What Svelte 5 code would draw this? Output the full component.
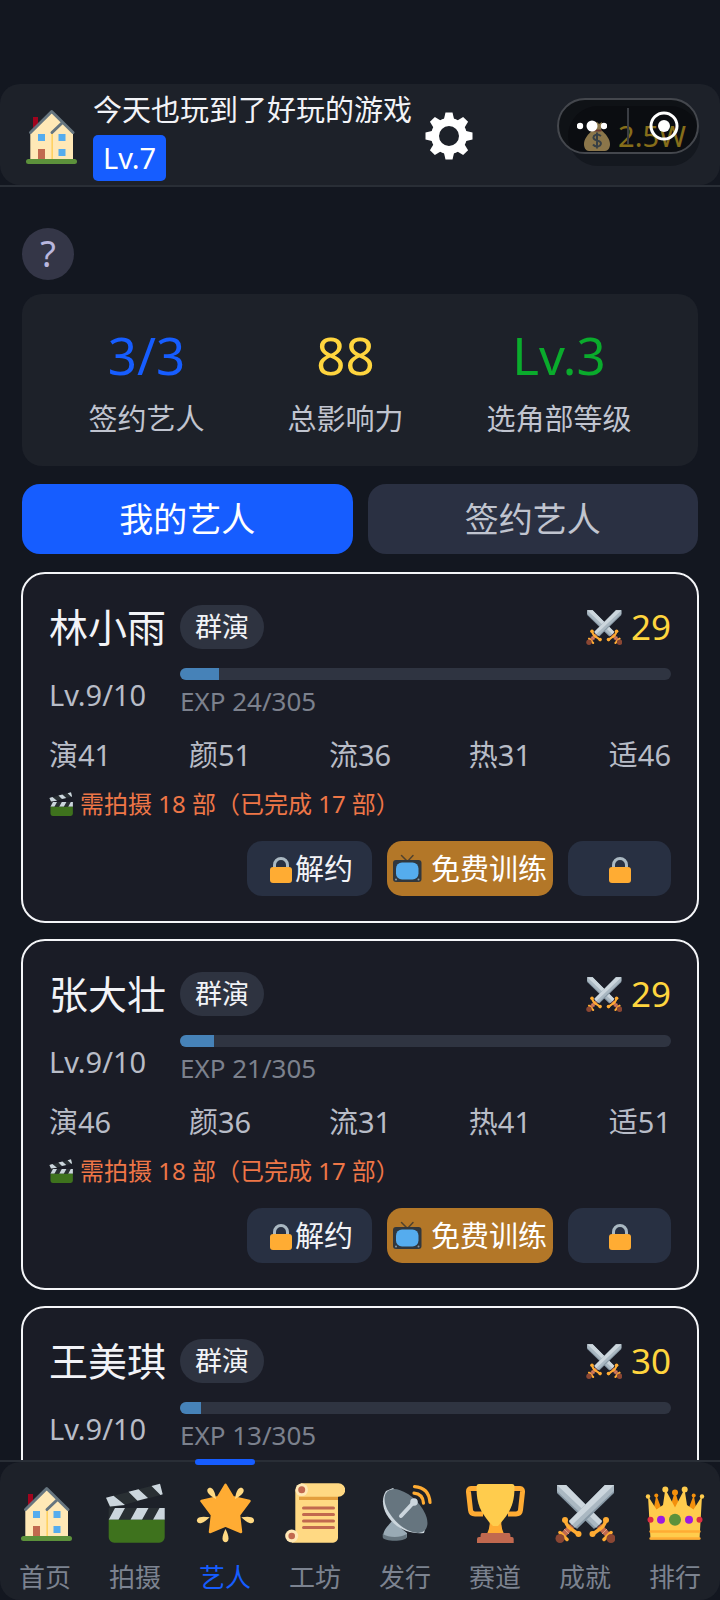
<script>
  const stats = [
    { value: '3/3', label: '签约艺人', tone: 'blue' },
    { value: '88', label: '总影响力', tone: 'gold' },
    { value: 'Lv.3', label: '选角部等级', tone: 'green' }
  ];

  const artists = [
    { name: '林小雨', power: 29, exp: 24, attrs: ['演41', '颜51', '流36', '热31', '适46'] },
    { name: '张大壮', power: 29, exp: 21, attrs: ['演46', '颜36', '流31', '热41', '适51'] },
    { name: '王美琪', power: 30, exp: 13 }
  ];
  const expMax = 305;

  const navItems = [
    { label: '首页', icon: 'house' },
    { label: '拍摄', icon: 'clapper' },
    { label: '艺人', icon: 'star' },
    { label: '工坊', icon: 'scroll' },
    { label: '发行', icon: 'dish' },
    { label: '赛道', icon: 'trophy' },
    { label: '成就', icon: 'swords' },
    { label: '排行', icon: 'crown' }
  ];

  let tab = $state('mine');
  let page = $state('艺人');
</script>

{#snippet sword()}
  <path fill="#8899a6" d="M50 2h9v8L22 46l-8-8z" />
  <path fill="#aab8c2" d="M50 2h9v6L20 45l-6-6z" />
  <path fill="#ccd6dd" d="M50 2h9L17 42l-3-4z" />
  <path stroke="#c1694f" stroke-width="6" d="M17 43 7 53" />
  <path stroke="#d99e82" stroke-width="1" d="m12 43 5 5m-8-2 5 5" />
  <path stroke="#ffac33" stroke-width="3.500" stroke-linecap="round" d="M10 37q2 7 6 9 3 2 7 5M5 49.500l7 7" />
  <circle cx="10" cy="37" r="3" fill="#ffac33" />
  <circle cx="23.500" cy="51" r="3" fill="#ffac33" />
  <circle cx="5" cy="55.500" r="4.500" fill="#8a4633" />
{/snippet}

{#snippet icon(kind)}
  <svg class="icon {kind}" viewBox="0 0 60 60" fill="none" aria-hidden="true">
    {#if kind === 'house'}
      <path fill="#a0041e" d="M13 11h5v13h-5z" />
      <path fill="#ffe8b6" d="M31.700 6 53 27v26H10.300V27z" />
      <path fill="#ffcc4d" d="M31.500 28h1.300v25h-1.300z" />
      <path stroke="#66757f" stroke-width="3" stroke-linejoin="round" stroke-linecap="round" d="M10.500 26.500 31.700 5.500 53 26.500M32 26.500l10-9.500" />
      <path fill="#55acee" d="M18 28h7v7h-7zM38.500 28h7v7h-7zM38.500 43h7v7h-7z" />
      <path fill="#c1694f" d="M18 43h7v10h-7z" />
      <rect x="6" y="53" width="51" height="5" rx="2.500" fill="#5c913b" />
    {:else if kind === 'clapper'}
      <path fill="#292f33" d="m1 14.700 54-14L57.700 11.500 5 25.500zM3.700 25h56v12h-56z" />
      <path fill="#ccd6dd" d="m1 14.700 7.500-2L20 22 5 23.500zM23.500 8.800l10-2.600L43 15l-10.500 2.800zM46.500 3l8.500-2.300 2.700 10.600-2.200.6zM3.700 36.700 10 25h10l-6.500 11.700zM25.500 36.700 32 25h11.500L37 36.700zM48 36.700 54.500 25h5.200v11.700z" />
      <path fill="#3e721d" d="M3.700 36.700h56V54a5.500 5.500 0 0 1-5.500 5.700h-45A5.500 5.500 0 0 1 3.700 54z" />
    {:else if kind === 'star'}
      <path fill="#ffac33" stroke="#ffac33" stroke-width="2.500" stroke-linejoin="round" d="m30.500 1.800 7.500 12.500 16.500 3.700-10.500 14 2 17-15.500-6.500L15 49l2-17L6.500 18 23 14.300z" />
      <g fill="#ffd983">
        {#each [0, 73, -73, 145, -145] as angle}
          <path d="M30.500 46c2 4 3 7 3 9.500 0 5-6 5-6 0 0-2.500 1-5.500 3-9.500z" transform="rotate({angle} 30.500 29.500)" />
        {/each}
      </g>
    {:else if kind === 'scroll'}
      <path fill="#ffd983" d="M16 .3h37.500a6.500 6.500 0 0 1 0 13.400H53V55a5 5 0 0 1-5 4.700H7V48h3.300V7z" />
      <path fill="#e39f3d" d="M14 13.700h39V17H14z" />
      <circle cx="16.700" cy="6.700" r="6.300" fill="#ffe8b6" />
      <circle cx="6.700" cy="53" r="6.500" fill="#ffe8b6" />
      <circle cx="16.700" cy="6.700" r="3.500" fill="#c1694f" />
      <circle cx="6.700" cy="53" r="3.300" fill="#c1694f" />
      <path stroke="#c1694f" stroke-width="3" stroke-linecap="round" d="M18.500 25h30m-30 6.500h30m-30 6.500h30m-30 6.600h30" />
    {:else if kind === 'dish'}
      <path fill="#99aab5" d="M8 54c0-7 5-11 9-16l15 12v4c-3 4-21 4-24 0z" />
      <path fill="#66757f" d="M7.700 51c6 4 18 4 24 0v3c0 5-24 5-24 0z" />
      <path fill="#ccd6dd" d="M11 8C0 25 20 53 49 50L52 40 18 5z" />
      <ellipse cx="31" cy="28" rx="27" ry="14.500" fill="#66757f" transform="rotate(46 31 28)" />
      <path stroke="#ccd6dd" stroke-width="4" stroke-linecap="round" d="m26 33 13-14" />
      <circle cx="39" cy="19" r="3.800" fill="#ccd6dd" />
      <path stroke="#ffac33" stroke-width="3.200" stroke-linecap="round" d="M39 10.200q9 .8 9.500 10M39.500 3.600Q54 4.500 55 19.500" />
    {:else if kind === 'trophy'}
      <path stroke="#ffac33" stroke-width="5" stroke-linejoin="round" d="M15 5.500H6Q3.300 5.500 3.500 9l2 18q.4 4 4.500 4h8M46 5.500h9q2.700 0 2.500 3.500l-2 18q-.4 4-4.500 4h-8" />
      <path fill="#ffac33" d="M24.500 36h12q-1 8 2.500 15H22q3.500-7 2.500-15z" />
      <path fill="#ffcc4d" d="M14 1h33q2.500 0 2.500 3c0 18-5 25-13 35l-3.500 4h-5L24 39C16 29 11.500 22 11.500 4q0-3 2.500-3z" />
      <path fill="#c1694f" d="M17 50h27q1.500 0 1.500 4H47q1.700 0 1.700 2v4H12v-4q0-2 2-2h1.500q0-4 1.500-4z" />
    {:else if kind === 'swords'}
      <g transform="matrix(-1 0 0 1 61 0)">{@render sword()}</g>
      <g>{@render sword()}</g>
    {:else if kind === 'crown'}
      <path fill="#f4900c" d="m11.300 12 6 16h-9zM30 8l6 20H24zM48.700 12l3 16h-9z" />
      <g fill="#f4900c"><circle cx="11.300" cy="12.500" r="2" /><circle cx="30" cy="9.500" r="3" /><circle cx="48.700" cy="12.500" r="2" /></g>
      <path fill="#ffcc4d" d="M5.500 56.500 3 13l8.500 13.500L18 22l2.300-16L30 24.500 39.500 6 42 22l6.500 4.500L57 13l-2.500 43.500z" />
      <g fill="#ffcc4d"><circle cx="3" cy="13.500" r="2.200" /><circle cx="20.300" cy="6.500" r="3" /><circle cx="39.700" cy="6.500" r="3" /><circle cx="57" cy="13.500" r="2.200" /></g>
      <path stroke="#ffac33" stroke-width="2.400" stroke-linecap="round" d="M5.500 48.500h49m-49 7h49" />
      <circle cx="5.500" cy="36.700" r="3" fill="#dd2e44" />
      <circle cx="54.500" cy="36.700" r="3" fill="#dd2e44" />
      <circle cx="16" cy="36.700" r="4" fill="#9c1be0" />
      <circle cx="44" cy="36.700" r="4" fill="#9c1be0" />
      <circle cx="30" cy="36.700" r="6" fill="#5c913b" />
    {/if}
  </svg>
{/snippet}

{#snippet lock()}
  <svg class="glyph" viewBox="0 0 29 29" fill="none" aria-hidden="true">
    <path stroke="#aab8c2" stroke-width="3" d="M8.500 15v-4a6.500 6.500 0 0 1 13 0v4" />
    <rect x="4" y="13" width="22" height="16" rx="3" fill="#ffac33" />
  </svg>
{/snippet}

<div class="app">
  <header>
    <div class="bar">
      {@render icon('house')}
      <div class="who">
        <span class="title">今天也玩到了好玩的游戏</span>
        <span class="level">Lv.7</span>
      </div>
      <button class="gear" aria-label="设置">
        <svg viewBox="-24 -24 48 48" aria-hidden="true">
          <g fill="#fff">
            {#each [0, 45, 90, 135, 180, 225, 270, 315] as angle}
              <path d="M-5.500-15 -3.500-23.500h7L5.500-15z" transform="rotate({angle})" />
            {/each}
          </g>
          <circle r="14" fill="none" stroke="#fff" stroke-width="8" />
        </svg>
      </button>
      <div class="coins">
        <svg class="bag" viewBox="0 0 26 30" aria-hidden="true">
          <path fill="#fdd888" d="M8 1 11 3l2-2 2 2 3-2-1 8c5 4 9 9 9 14 0 4-2 7-5 7H5c-3 0-5-3-5-7C0 18 4 13 9 9z" />
          <path fill="none" stroke="#bf6952" stroke-width="2" d="M8.500 9.500h9" />
          <path fill="none" stroke="#67757f" stroke-width="2" d="M17 15q-4-3-7 0-2 3 3 4.500 6 1.500 3 5-4 2.500-7-1M13 11.500v16" />
        </svg>
        <span>2.5W</span>
        <div class="capsule">
          <button aria-label="更多">
            <svg viewBox="0 0 30 12" width="30" height="12"><g fill="#fff"><circle cx="3" cy="6" r="3.200" /><circle cx="15" cy="6" r="5.500" /><circle cx="27" cy="6" r="3.200" /></g></svg>
          </button>
          <i></i>
          <button aria-label="关闭">
            <svg viewBox="0 0 30 30" width="30" height="30"><circle cx="15" cy="15" r="13" fill="none" stroke="#fff" stroke-width="3" /><circle cx="15" cy="15" r="6" fill="#fff" /></svg>
          </button>
        </div>
      </div>
    </div>
  </header>

  <main>
    <button class="help" aria-label="帮助">?</button>

    <section class="stats">
      {#each stats as s}
        <div class="stat">
          <strong class={s.tone}>{s.value}</strong>
          <span>{s.label}</span>
        </div>
      {/each}
    </section>

    <div class="tabs">
      <button class:active={tab === 'mine'} onclick={() => (tab = 'mine')}>我的艺人</button>
      <button class:active={tab === 'sign'} onclick={() => (tab = 'sign')}>签约艺人</button>
    </div>

    <div class="cards">
      {#each artists as a}
        <article>
          <div class="head">
            <h2>{a.name}</h2>
            <span class="rank">群演</span>
            <span class="power">{@render icon('swords')}{a.power}</span>
          </div>
          <div class="progress">
            <span class="lv">Lv.9/10</span>
            <div class="exp">
              <div class="track"><div class="fill" style="width: {(a.exp / expMax) * 100}%"></div></div>
              <span>EXP {a.exp}/{expMax}</span>
            </div>
          </div>
          {#if a.attrs}
            <div class="attrs">
              {#each a.attrs as attr}<span>{attr}</span>{/each}
            </div>
            <div class="need">{@render icon('clapper')}<span>需拍摄 18 部（已完成 17 部）</span></div>
            <div class="actions">
              <button>{@render lock()}解约</button>
              <button class="train">
                <svg class="glyph" viewBox="0 0 29 29" fill="none" aria-hidden="true">
                  <path stroke="#50422f" stroke-width="1.500" stroke-linecap="round" d="m8.500 1.500 6 6 5.500-6" />
                  <rect y="6" width="28.500" height="22" rx="3" fill="#31373d" />
                  <rect x="3" y="8.500" width="22.500" height="17" rx="6" fill="#55acee" />
                  <circle cx="3" cy="25.500" r="1" fill="#8899a6" /><circle cx="25.500" cy="25.500" r="1" fill="#8899a6" />
                </svg>
                免费训练
              </button>
              <button class="lock" aria-label="锁定">{@render lock()}</button>
            </div>
          {/if}
        </article>
      {/each}
    </div>
  </main>

  <nav>
    <div class="bar">
      {#each navItems as item}
        <button class:active={page === item.label} onclick={() => (page = item.label)}>
          {@render icon(item.icon)}
          <span>{item.label}</span>
        </button>
      {/each}
    </div>
  </nav>
</div>

<style>
  :global(body) {
    margin: 0;
    background: #131720;
  }
  .app {
    box-sizing: border-box;
    display: flex;
    flex-direction: column;
    height: 100vh;
    padding-top: 84px;
    overflow: hidden;
    background: #131720;
    color: #f2f3f7;
    font-family: 'Noto Sans', 'Noto Sans CJK SC', sans-serif;
    font-size: 29px;
  }
  button {
    display: flex;
    align-items: center;
    justify-content: center;
    margin: 0;
    padding: 0;
    border: 0;
    background: none;
    color: inherit;
    font: inherit;
    cursor: pointer;
  }
  svg {
    display: block;
    flex: none;
  }
  .icon {
    width: 60px;
    height: 60px;
  }
  .glyph {
    width: 29px;
    height: 29px;
  }

  header {
    flex: none;
    border-bottom: 2px solid #292e36;
  }
  header .bar {
    display: flex;
    align-items: center;
    padding: 6px 20px 4px;
    border-radius: 20px;
    background: #1d2129;
  }
  .who {
    display: flex;
    flex-direction: column;
    align-items: flex-start;
    gap: 5px;
    margin: 0 13px;
    white-space: nowrap;
  }
  .title {
    line-height: 40px;
  }
  .level {
    padding: 0 10px;
    border-radius: 5px;
    background: #165dff;
    color: #fff;
    line-height: 46px;
  }
  .gear svg {
    width: 48px;
    height: 48px;
  }
  .coins {
    position: relative;
    display: flex;
    align-items: center;
    gap: 8px;
    margin-left: auto;
    padding: 0 14px 0 16px;
    border-radius: 30px;
    background: #14181f;
    color: #f5c830;
    line-height: 60px;
  }
  .bag {
    width: 26px;
    height: 30px;
  }
  .capsule {
    position: absolute;
    top: -8px;
    right: 1px;
    box-sizing: border-box;
    display: flex;
    align-items: center;
    justify-content: space-between;
    width: 142px;
    height: 56px;
    padding: 0 18px;
    border: 2px solid #44474d;
    border-radius: 28px;
    background: rgba(0, 0, 0, 0.45);
  }
  .capsule i {
    width: 2px;
    height: 36px;
    background: #3a3d43;
  }

  main {
    display: flex;
    flex: 1;
    flex-direction: column;
    min-height: 0;
    overflow-x: hidden;
    overflow-y: auto;
    padding: 41px 21px 0;
    scrollbar-width: none;
  }
  .help {
    flex: none;
    width: 52px;
    height: 52px;
    margin: 0 1px 14px;
    border-radius: 50%;
    background: #343647;
    color: #b9b7df;
    font-size: 36px;
    line-height: 52px;
  }
  .stats {
    display: flex;
    flex: none;
    justify-content: space-around;
    margin: 0 1px;
    padding: 31px 25px 25px;
    border-radius: 20px;
    background: #1d2129;
  }
  .stat {
    display: flex;
    flex-direction: column;
    align-items: center;
    gap: 12px;
  }
  .stat strong {
    font-size: 51px;
    font-weight: 400;
    line-height: 60px;
  }
  .stat span {
    color: #c0c4cf;
    line-height: 44px;
  }
  .stat .blue {
    color: #165dff;
  }
  .stat .gold {
    color: #ffd53e;
  }
  .stat .green {
    color: #0aab2c;
  }
  .tabs {
    display: grid;
    flex: none;
    grid-template-columns: 1fr 1fr;
    gap: 15px;
    margin: 18px 1px;
  }
  .tabs button {
    border-radius: 18px;
    background: #2a3042;
    color: #c0c4cf;
    font-size: 34px;
    line-height: 70px;
  }
  .tabs .active {
    background: #165dff;
    color: #fff;
  }

  .cards {
    display: flex;
    flex: none;
    flex-direction: column;
    gap: 16px;
  }
  article {
    display: flex;
    flex-direction: column;
    gap: 14px;
    padding: 26px 26px 25px;
    border: 2px solid #f4f5f8;
    border-radius: 24px;
    background: #1a1c26;
  }
  .head {
    display: flex;
    align-items: center;
    gap: 14px;
    line-height: 54px;
  }
  h2 {
    margin: 0;
    font-size: 39px;
    font-weight: 400;
  }
  .rank {
    padding: 0 15px;
    border-radius: 22px;
    background: #2e3340;
    font-size: 27px;
    line-height: 44px;
  }
  .power {
    display: flex;
    align-items: center;
    gap: 9px;
    margin-left: auto;
    color: #ffd53e;
    font-size: 35px;
  }
  .power .icon {
    width: 36px;
    height: 36px;
  }
  .progress {
    display: grid;
    grid-template-columns: 117px 1fr;
    gap: 14px;
    align-items: center;
    color: #b8bcc7;
  }
  .lv {
    line-height: 54px;
  }
  .exp {
    display: flex;
    flex-direction: column;
    color: #7c818d;
    font-size: 26px;
    line-height: 42px;
  }
  .track {
    height: 12px;
    overflow: hidden;
    border-radius: 6px;
    background: #2f3441;
  }
  .fill {
    height: 100%;
    background: #4682b8;
  }
  .attrs {
    display: flex;
    justify-content: space-between;
    color: #b8bcc7;
    line-height: 38px;
  }
  .need {
    display: flex;
    align-items: center;
    gap: 7px;
    color: #ee7647;
    font-size: 24px;
    line-height: 32px;
  }
  .need .icon {
    width: 24px;
    height: 24px;
  }
  .actions {
    display: flex;
    justify-content: flex-end;
    gap: 15px;
    padding-top: 7px;
  }
  .actions button {
    padding: 0 19px;
    border-radius: 15px;
    background: #283042;
    line-height: 55px;
  }
  .actions .train {
    gap: 9px;
    padding: 0 6px;
    background: #b37728;
    color: #fff;
  }
  .actions .lock {
    padding: 0 37px;
  }

  nav {
    flex: none;
    border-top: 2px solid #292e36;
  }
  nav .bar {
    display: grid;
    grid-template-columns: repeat(8, 1fr);
    border-radius: 20px;
    background: #1d2129;
  }
  nav button {
    position: relative;
    flex-direction: column;
    gap: 14px;
    padding: 21px 0 3px;
    color: #7c8390;
    font-size: 26px;
    line-height: 40px;
  }
  nav .active {
    color: #165dff;
  }
  nav .active::before {
    position: absolute;
    top: -3px;
    left: 50%;
    width: 60px;
    height: 6px;
    margin-left: -30px;
    border-radius: 3px;
    background: #165dff;
    content: '';
  }
</style>
